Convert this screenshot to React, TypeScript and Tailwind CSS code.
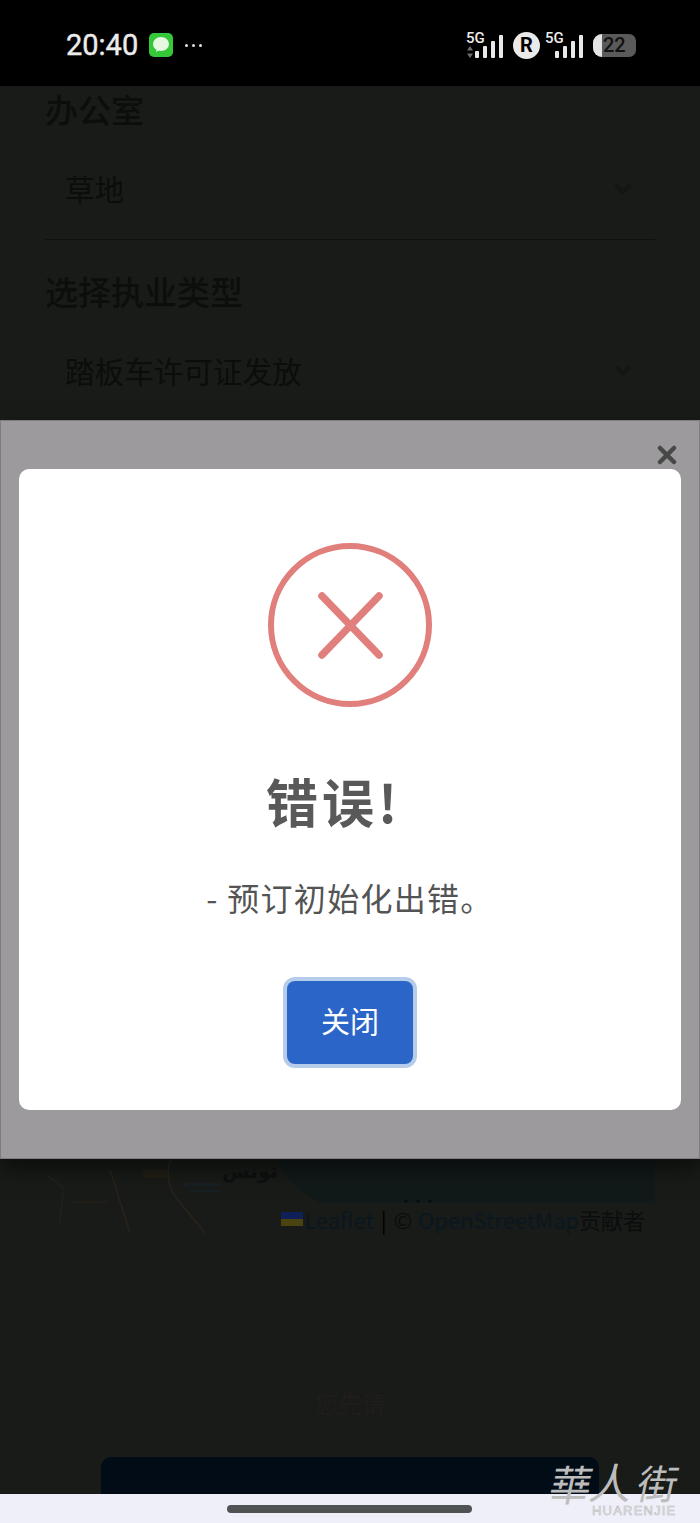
import { ChevronDown } from "lucide-react";

const cjk = "font-['Noto_Sans_CJK_SC','Noto_Sans',sans-serif]";

function SignalBars() {
  return (
    <div className="flex items-end gap-[4px]">
      <span className="h-[7px] w-[4px] rounded-[1px] bg-[#e8e8e8]" />
      <span className="h-[12px] w-[4px] rounded-[1px] bg-[#e8e8e8]" />
      <span className="h-[17px] w-[4px] rounded-[1px] bg-[#e8e8e8]" />
      <span className="h-[23px] w-[4px] rounded-[1px] bg-[#e8e8e8]" />
    </div>
  );
}

function StatusBar() {
  return (
    <div className="flex h-[86px] shrink-0 items-center bg-black pl-[66px] pr-[64px] pt-[4px] font-['Roboto',sans-serif] text-[#ececec]">
      <span className="text-[29px] font-normal leading-none [-webkit-text-stroke:0.4px_#ececec]">20:40</span>
      <svg viewBox="0 0 24 24" className="ml-[11px] h-[24px] w-[24px]">
        <rect width="24" height="24" rx="5" fill="#35c93a" />
        <ellipse cx="12" cy="11" rx="8" ry="7" fill="#e6f7e2" />
        <path d="M8 15l-1 4 5-3z" fill="#e6f7e2" />
      </svg>
      <div className="ml-[12px] flex gap-[4px]">
        <span className="h-[3px] w-[3px] rounded-full bg-[#e0e0e0]" />
        <span className="h-[3px] w-[3px] rounded-full bg-[#e0e0e0]" />
        <span className="h-[3px] w-[3px] rounded-full bg-[#e0e0e0]" />
      </div>

      <div className="ml-auto flex items-center">
        <div className="flex h-[26px] items-end">
          <div className="flex h-full w-[18px] flex-col justify-between">
            <span className="text-[15px] font-medium leading-[12px]">5G</span>
            <svg viewBox="0 0 8 12" className="h-[12px] w-[8px]">
              <path d="M4 0l3 4.5H1zM4 12l3-4.5H1z" fill="#6d6d6d" />
            </svg>
          </div>
          <div className="ml-[-9px]"><SignalBars /></div>
        </div>
        <span className="ml-[10px] flex h-[27px] w-[27px] items-center justify-center rounded-full bg-[#eaeaea] text-[20px] font-bold leading-none text-black">R</span>
        <div className="ml-[5px] flex h-[26px] items-end">
          <span className="h-full w-[18px] text-[15px] font-medium leading-[12px]">5G</span>
          <div className="ml-[-8px]"><SignalBars /></div>
        </div>
        <div className="relative ml-[10px] flex h-[23px] w-[43px] items-center overflow-hidden rounded-l-[9px] rounded-r-[7px] bg-[#5a5a5a]">
          <span className="h-full w-[9px] bg-[#e4e4e4]" />
          <span className="absolute left-[10px] text-[20px] font-medium leading-none text-[#111]">22</span>
        </div>
      </div>
    </div>
  );
}

function Field({ label, value, last }: { label: string; value: string; last?: boolean }) {
  return (
    <div>
      <h3 className={`${cjk} text-[33px] font-medium leading-[44px] text-[#0c0e0c]`}>{label}</h3>
      <div className={`flex h-[109px] items-center justify-between pl-[20px] pr-[20px] pt-[7px] ${last ? "" : "border-b border-[#0f110f]"}`}>
        <span className={`${cjk} text-[29.6px] leading-none text-[#0b0d0b]`}>{value}</span>
        <ChevronDown className="h-[24px] w-[24px] text-[#131613]" strokeWidth={4} />
      </div>
    </div>
  );
}

function MapStrip() {
  return (
    <div className="relative mt-[738px] h-[75px] shrink-0">
      <svg viewBox="0 0 610 75" className="absolute inset-0 h-full w-full">
        <path d="M232 0c5 15 20 30 43 43h335V0z" fill="#121919" />
        <path d="M98 10h24v8H98z" fill="#211e14" />
        <path d="M138 23h37v3h-37zM145 30h30v2h-30z" fill="#172024" />
        <path d="M125 0c-5 20 3 33 3 33 12 17 22 27 32 40M65 10l20 63" fill="none" stroke="#2a2319" strokeWidth="1.5" />
        <path d="M18 33l-3 30M27 42h35M2 15l18 15" fill="none" stroke="#252119" strokeWidth="1.5" />
        <circle cx="361" cy="41" r="1.5" fill="#0a0c0c" />
        <circle cx="373" cy="41" r="1.5" fill="#0a0c0c" />
        <circle cx="385" cy="41" r="1.5" fill="#0a0c0c" />
      </svg>
      <span className="absolute left-[177px] top-[0px] font-['DejaVu_Sans',sans-serif] text-[20px] font-bold leading-[22px] text-[#0e1010]">تونس</span>
      <div className={`${cjk} absolute right-[10px] top-[44px] flex items-center text-[22px] leading-[30px] text-[#0a0d0c]`}>
        <svg viewBox="0 0 22 14" className="mr-px h-[14px] w-[22px]">
          <rect width="22" height="7" fill="#0f1f57" />
          <rect y="7" width="22" height="7" fill="#4a4310" />
        </svg>
        <span className="text-[#0b1720]">Leaflet</span>
        <span className="mx-[7px] text-black">|</span>
        <span className="mr-[6px]">©</span>
        <span className="text-[#0b1720]">OpenStreetMap</span>
        <span>贡献者</span>
      </div>
    </div>
  );
}

function ErrorModal() {
  return (
    <div className="absolute left-0 right-0 top-[420px] flex h-[739px] flex-col border border-[#7e7c7f] bg-[#9c9a9d] shadow-[0_10px_20px_rgba(0,0,0,0.5)]">
      <svg viewBox="0 0 20 20" className="absolute right-[22px] top-[24px] h-[20px] w-[20px]">
        <path d="M3 3l14 14M17 3L3 17" stroke="#484848" strokeWidth="4.5" strokeLinecap="round" />
      </svg>
      <div className="mx-[18px] mt-[48px] flex h-[641px] flex-col items-center rounded-[10px] bg-white">
        <svg viewBox="0 0 164 164" className="mt-[74px] h-[164px] w-[164px]">
          <circle cx="82" cy="82" r="79" fill="none" stroke="#e07f7c" strokeWidth="6" />
          <path d="M54 53l57 59M111 53l-57 59" stroke="#e07f7c" strokeWidth="7.5" strokeLinecap="round" />
        </svg>
        <h2 className={`${cjk} mt-[52px] pr-[33px] text-[52px] font-bold leading-[84px] tracking-[4px] text-[#595959]`}>错误!</h2>
        <p className={`${cjk} mt-[30px] text-[32px] leading-[48px] tracking-[1.3px] text-[#545454]`}>- 预订初始化出错。</p>
        <button className={`${cjk} mt-[60px] h-[83px] w-[126px] rounded-[8px] bg-[#2b65c8] pb-[3px] text-[29px] text-white ring-4 ring-[#b5cceb]`}>
          关闭
        </button>
      </div>
    </div>
  );
}

export default function App() {
  return (
    <div className="relative flex h-[1523px] w-[700px] flex-col overflow-hidden bg-[#181b18]">
      <StatusBar />

      <div className="flex flex-1 flex-col overflow-hidden px-[45px]">
        <div className="pt-[1px]">
          <Field label="办公室" value="草地" />
          <div className="mt-[29px]">
            <Field label="选择执业类型" value="踏板车许可证发放" last />
          </div>
        </div>

        {/* map, mostly hidden behind the modal */}
        <MapStrip />

        <p className={`${cjk} mt-[152px] text-center text-[23.5px] leading-[32px] text-[#211d1c]`}>您先请</p>
        <div className="mx-[56px] mt-[38px] h-[60px] shrink-0 rounded-t-[10px] bg-[#010c17]" />
      </div>

      <div className="relative z-10 flex h-[29px] shrink-0 items-center justify-center bg-[#eeeff8]">
        <span className="ml-[-1px] h-[8px] w-[245px] rounded-full bg-[#505354]" />
      </div>

      {/* site watermark */}
      <div className="absolute left-[550px] top-[1455px] z-20 flex font-['Noto_Sans_CJK_TC',serif] font-normal text-[#bcbcbc]">
        <span className="-skew-x-12 text-[42px] leading-[56px]">華</span>
        <div className="flex flex-col">
          <div className="flex h-[48px] items-end gap-[5px] -skew-x-12">
            <span className="text-[42px] leading-[44px]">人</span>
            <span className="text-[40px] leading-[42px]">街</span>
          </div>
          <span className="mt-[1px] font-['Liberation_Sans',sans-serif] text-[13px] leading-[13px] tracking-[1.2px] text-[#eeeff8] [-webkit-text-stroke:0.6px_#bcbcbc]">HUARENJIE</span>
        </div>
      </div>

      <ErrorModal />
    </div>
  );
}
